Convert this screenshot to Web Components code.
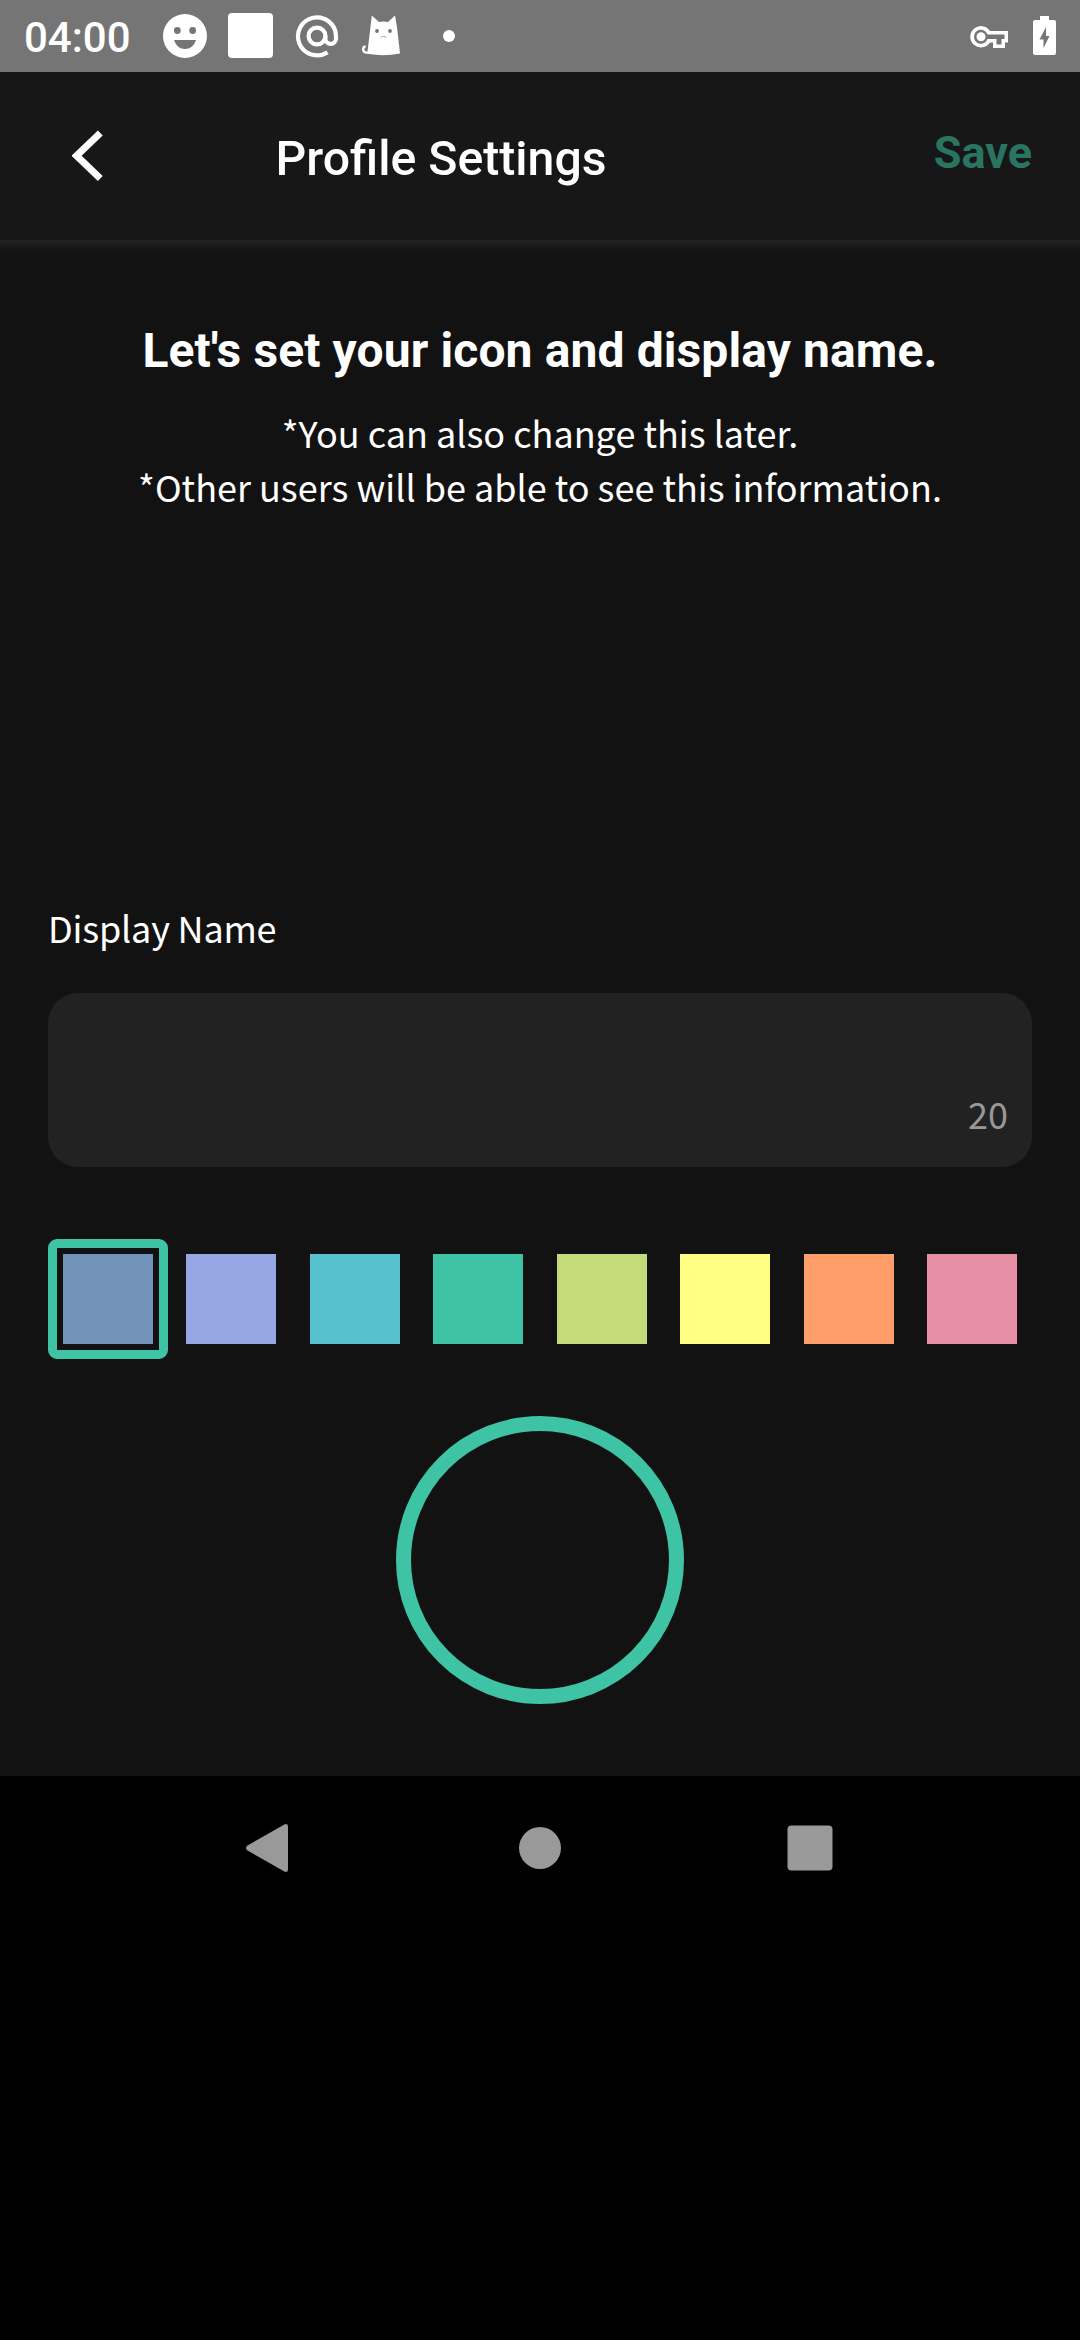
<!DOCTYPE html>
<html lang="en"><head><meta charset="utf-8"><title>Profile Settings</title>
<style>
body{margin:0;background:#000;color:#fff;font-family:Roboto,sans-serif}
</style></head>
<body>
<profile-screen></profile-screen>
<script>
function define(name, markup){
  customElements.define(name, class extends HTMLElement{
    constructor(){super();this.attachShadow({mode:'open'}).innerHTML=markup}
  });
}

define('status-bar', `<style>
:host{display:flex;align-items:center;justify-content:space-between;box-sizing:border-box;height:72px;background:#757575;padding:0 24px}
.time{font:500 42px/72px Roboto,sans-serif;width:139px;padding-top:3px;height:69px;line-height:69px;white-space:nowrap}
.group{display:flex;align-items:center}
svg{display:block;fill:#fff}
</style>
<div class="group"><div class="time">04:00</div>
<svg width="300" height="72" viewBox="163 0 300 72">
<circle cx="185" cy="36" r="22"/><g fill="#757575"><circle cx="177.300" cy="30.500" r="3.400"/><circle cx="192.700" cy="30.500" r="3.400"/><path d="M174 40H196C194 46 190 49 185 49S176 46 174 40Z"/></g>
<rect x="228" y="13" width="45" height="45" rx="4"/>
<g fill="none" stroke="#fff" stroke-width="4.200"><circle cx="317" cy="36" r="8.400"/><path d="M327.500 52.200A19 19 0 1 1 336 36V38.500A5.300 5.300 0 0 1 325.400 38.500V36"/></g>
<path d="M371.800 15.500L379 22Q383.500 21 388 22L395 15.500L397 27L400 53.500Q384 56.500 369 54Q362 54 362 49.500Q362 45 365.500 45.500L366 47.500Q364 47.500 364.500 50Q365.500 52 367.500 51.500L369.500 35Z"/>
<g fill="#757575"><circle cx="377" cy="31" r="1.900"/><circle cx="390" cy="31" r="1.900"/></g><path d="M380.500 37.500Q382 36 383.500 36.500Q385 36 386.500 37.500" fill="none" stroke="#aaa"/>
<circle cx="449" cy="36" r="6"/>
</svg></div>
<svg width="86" height="72" viewBox="970 0 86 72">
<path fill-rule="evenodd" d="M990 31H1008V42.500H1005V48H993V42.500H990A10.700 10.700 0 1 1 990 31ZM987.500 34.500A7 7 0 1 0 987.500 39H996.500V44.500H1001.500V39H1004.500V34.500Z"/>
<circle cx="981" cy="36.700" r="4.500"/>
<path fill-rule="evenodd" d="M1040 16H1049V20H1054Q1056 20 1056 22V53Q1056 55 1054 55H1035Q1033 55 1033 53V22Q1033 20 1035 20H1040ZM1046 27L1039.500 39.500H1043.500V48L1049.500 36H1046Z"/>
</svg>`);

define('app-header', `<style>
:host{display:flex;align-items:center;box-sizing:border-box;height:168px;padding:0 48px 0 72px;background:#171717}
svg{display:block;width:31px;height:52px}
.title{font-size:48.2px;font-weight:500;line-height:60px;margin-left:172.5px;padding-top:6px;flex:1;white-space:nowrap}
.save{font-size:45px;font-weight:700;line-height:60px;padding-bottom:7px;color:#2a7562}
</style>
<svg viewBox="72 130 31 52"><path d="M100.300 133L76.600 155.700L100.300 178.500" fill="none" stroke="#fff" stroke-width="7"/></svg>
<div class="title"><slot></slot></div><div class="save"><slot name="action"></slot></div>`);

define('intro-text', `<style>
:host{display:block;text-align:center}
.h{font-size:48px;font-weight:700;line-height:60px;letter-spacing:.11px;white-space:nowrap}
.p{font-family:"Noto Sans CJK JP",sans-serif;font-size:36px;line-height:54px;margin-top:24px;white-space:nowrap}
</style><div class="h"><slot name="heading"></slot></div><div class="p"><slot></slot></div>`);

define('name-field', `<style>
:host{display:block;font-family:"Noto Sans CJK JP",sans-serif;font-size:36px;line-height:54px}
.label{letter-spacing:-.2px}
.box{display:flex;justify-content:flex-end;align-items:flex-end;box-sizing:border-box;height:174px;margin-top:39px;padding:0 24px 27px;border-radius:30px;background:#222;color:#989898}
</style><div class="label"><slot></slot></div><div class="box"><slot name="count"></slot></div>`);

define('color-swatch', `<style>
:host{display:block;box-sizing:border-box;width:120px;height:120px;padding:6px;border:9px solid transparent;border-radius:9px}
:host([selected]){border-color:#3ec4a5}
div{height:90px;background:var(--c)}
</style><div></div>`);

define('color-row', `<style>:host{display:flex;justify-content:space-between}</style><slot></slot>`);

define('icon-preview', `<style>:host{display:block;box-sizing:border-box;width:288px;height:288px;border:15px solid #3ec4a5;border-radius:50%}</style>`);

define('nav-bar', `<style>
:host{display:flex;justify-content:center;height:144px;background:#000}
svg{display:block;fill:#999}
</style><svg width="1080" height="144" viewBox="0 1776 1080 144">
<path d="M247.500 1845.500L283.500 1825Q288 1822.500 288 1827V1869Q288 1873.500 283.500 1871L247.500 1850.500Q244.500 1848 247.500 1845.500Z"/>
<circle cx="540" cy="1848" r="21"/><rect x="787.500" y="1825.500" width="45" height="45" rx="4"/></svg>`);

define('profile-screen', `<style>
:host{display:flex;flex-direction:column;height:2340px;width:1080px}
main{display:flex;flex-direction:column;box-sizing:border-box;height:1536px;padding:81px 48px 0;background:linear-gradient(#242424,#1b1b1b 5px,#151515 10px,#121212 16px)}
name-field{margin-top:387px}
color-row{margin-top:72px}
icon-preview{margin-top:57px;align-self:center}
</style>
<status-bar></status-bar>
<app-header>Profile Settings<span slot="action">Save</span></app-header>
<main>
<intro-text><span slot="heading">Let's set your icon and display name.</span>*You can also change this later.<br>*Other users will be able to see this information.</intro-text>
<name-field>Display Name<span slot="count">20</span></name-field>
<color-row>
<color-swatch selected style="--c:#7293b9"></color-swatch><color-swatch style="--c:#97a7e3"></color-swatch><color-swatch style="--c:#56c0cf"></color-swatch><color-swatch style="--c:#3ec4a5"></color-swatch><color-swatch style="--c:#c4db7a"></color-swatch><color-swatch style="--c:#feff82"></color-swatch><color-swatch style="--c:#ff9e68"></color-swatch><color-swatch style="--c:#e78fa5"></color-swatch>
</color-row>
<icon-preview></icon-preview>
</main>
<nav-bar></nav-bar>`);
</script>
</body></html>
